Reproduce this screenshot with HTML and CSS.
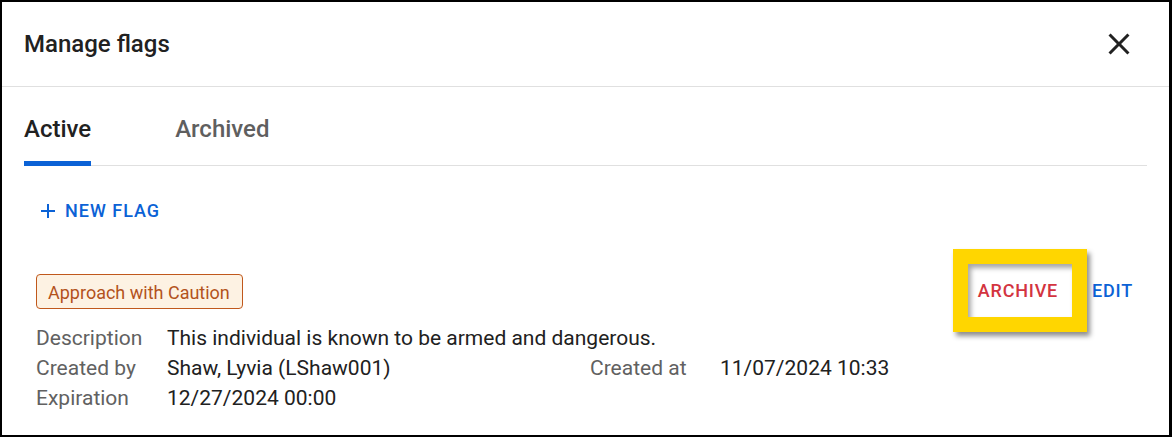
FILE: index.html
```html
<!doctype html>
<html>
<head>
<meta charset="utf-8">
<link rel="stylesheet" href="styles.css">
<title>Manage flags</title>
</head>
<body>
<div class="dialog">
  <div class="dialog-header">
    <h1>Manage flags</h1>
    <button class="close" aria-label="Close">
      <svg viewBox="0 0 24 24" width="36" height="36"><path d="M19 6.41L17.59 5 12 10.59 6.41 5 5 6.41 10.59 12 5 17.59 6.41 19 12 13.41 17.59 19 19 17.59 13.41 12z"/></svg>
    </button>
  </div>

  <div class="dialog-body">
    <div class="tabs">
      <div class="tab active">Active</div>
      <div class="tab">Archived</div>
    </div>

    <div class="content">
      <button class="btn new-flag">
        <svg viewBox="0 0 24 24" width="24" height="24"><path d="M19 13h-6v6h-2v-6H5v-2h6V5h2v6h6v2z"/></svg>
        New flag
      </button>

      <div class="flag">
        <div class="flag-top">
          <span class="chip">Approach with Caution</span>
          <div class="actions">
            <button class="btn archive">Archive</button>
            <button class="btn edit">Edit</button>
          </div>
        </div>
        <div class="details">
          <span class="label">Description</span>
          <span class="value wide">This individual is known to be armed and dangerous.</span>
          <span class="label">Created by</span>
          <span class="value">Shaw, Lyvia (LShaw001)</span>
          <span class="label">Created at</span>
          <span class="value">11/07/2024 10:33</span>
          <span class="label">Expiration</span>
          <span class="value">12/27/2024 00:00</span>
        </div>
      </div>
    </div>
  </div>
</div>
</body>
</html>
```

FILE: styles.css
```css
html, body {
    margin: 0;
    padding: 0;
    background: #fff;
}
body {
    font-family: Roboto, "Liberation Sans", Arial, sans-serif;
    color: #212121;
}
.dialog {
    box-sizing: border-box;
    width: 1172px;
    height: 437px;
    border-style: solid;
    border-color: #000;
    border-width: 2px 3px 2px 2px;
    overflow: hidden;
}
.dialog-header {
    display: flex;
    align-items: center;
    justify-content: space-between;
    height: 84px;
    padding: 0 32px 0 22px;
    border-bottom: 1px solid #e0e0e0;
}
.dialog-header h1 {
    margin: 0;
    font-size: 24px;
    font-weight: 500;
    line-height: 32px;
    color: #212121;
}
.close {
    display: flex;
    padding: 0;
    border: 0;
    background: none;
    cursor: pointer;
}
.close svg {
    fill: #212121;
}
.dialog-body {
    padding: 0 22px;
}
.tabs {
    display: flex;
    gap: 84px;
    margin-top: 26px;
    border-bottom: 1px solid #e0e0e0;
}
.tab {
    font-size: 24px;
    font-weight: 500;
    line-height: 32px;
    color: #5f5f5f;
    padding-bottom: 20px;
}
.tab.active {
    color: #212121;
    padding-bottom: 15px;
    border-bottom: 5px solid #0b62d6;
    margin-bottom: -1px;
}
.content {
    padding: 0 6px 0 12px;
}
.btn {
    display: inline-flex;
    align-items: center;
    border: 0;
    background: none;
    padding: 0;
    font-family: Roboto, "Liberation Sans", Arial, sans-serif;
    font-size: 18px;
    font-weight: 500;
    line-height: 24px;
    letter-spacing: 0.8px;
    text-transform: uppercase;
    cursor: pointer;
}
.new-flag {
    margin-top: 33px;
    gap: 5px;
    color: #0b62d6;
    letter-spacing: 1px;
}
.new-flag svg {
    fill: #0b62d6;
}
.flag {
    margin-top: 46px;
}
.flag-top {
    display: flex;
    align-items: center;
    justify-content: space-between;
}
.chip {
    font-size: 18px;
    line-height: 23px;
    padding: 6px 12px 4px 11px;
    color: #b3521c;
    background: #fdf2e3;
    border: 1px solid #c0581c;
    border-radius: 4px;
}
.actions {
    display: flex;
    gap: 18px;
}
.actions .btn {
    padding: 6px 8px;
}
.archive {
    position: relative;
    color: #d3343f;
}
/* review highlight drawn round the archive button */
.archive::after {
    content: "";
    position: absolute;
    top: -24px;
    right: -21px;
    bottom: -23px;
    left: -17px;
    border: 15px solid #ffd600;
    box-shadow: 3px 4px 5px rgba(0, 0, 0, 0.45), inset 3px 4px 5px rgba(0, 0, 0, 0.35);
}
.edit {
    color: #0b62d6;
}
.details {
    display: grid;
    grid-template-columns: 131px 423px 130px 1fr;
    margin-top: 14px;
    font-size: 21px;
    line-height: 30px;
}
.label {
    color: #616161;
}
.value {
    color: #212121;
}
.value.wide {
    grid-column: 2 / 5;
}
```
